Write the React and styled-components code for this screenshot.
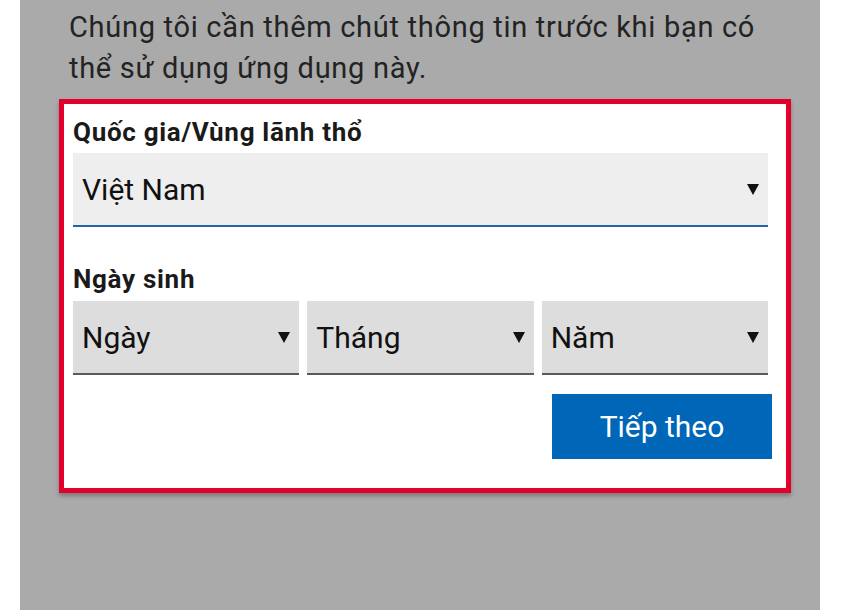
import React from "react";
import styled, { createGlobalStyle } from "styled-components";

const GlobalStyle = createGlobalStyle`
  html, body {
    margin: 0;
    padding: 0;
    background: #ffffff;
  }
  body {
    font-family: Roboto, "Noto Sans", "Liberation Sans", sans-serif;
  }
`;

const Screen = styled.div`
  margin-left: 20px;
  width: 800px;
  height: 610px;
  background-color: #aaaaaa;
  overflow: hidden;
`;

const Intro = styled.p`
  margin: 0;
  padding: 7px 30px 0 49px;
  font-size: 29px;
  letter-spacing: 0.7px;
  line-height: 41px;
  color: #232323;
`;

const Card = styled.div`
  margin: 10px 0 0 39px;
  width: 732px;
  box-sizing: border-box;
  border: 5px solid #e3002b;
  background-color: #ffffff;
  padding: 14px 16px 29px 9px;
  box-shadow: 0 3px 4px rgba(0, 0, 0, 0.28);
`;

const Label = styled.div`
  font-size: 26px;
  font-weight: 700;
  letter-spacing: 0.7px;
  line-height: 28px;
  color: #1a1a1a;
  margin-top: ${({ $top }) => $top || 0}px;
`;

const Select = styled.div`
  display: flex;
  align-items: center;
  justify-content: space-between;
  box-sizing: border-box;
  height: 74px;
  padding: 0 9px;
  background-color: ${({ $light }) => ($light ? "#eeeeee" : "#dddddd")};
  border-bottom: 2px solid ${({ $accent }) => ($accent ? "#1c64ae" : "#5a5a5a")};
  margin-right: 2px;
  margin-top: ${({ $top }) => $top || 0}px;
  font-size: 30px;
  color: #111111;
  flex: 1;
`;

const Row = styled.div`
  display: flex;
  gap: 8px;
  margin-top: 8px;
  margin-right: 2px;
  ${Select} {
    margin-right: 0;
  }
`;

const Footer = styled.div`
  display: flex;
  justify-content: flex-end;
  margin-top: 19px;
`;

const Button = styled.button`
  width: 220px;
  height: 65px;
  border: none;
  background-color: #0066b8;
  color: #ffffff;
  font-family: inherit;
  font-size: 30px;
  padding: 0;
  margin-right: -2px;
`;

const Arrow = () => (
  <svg width="12" height="11" viewBox="0 0 12 11">
    <polygon points="0,0 12,0 6,11" fill="#111" />
  </svg>
);

export default function App() {
  return (
    <>
      <GlobalStyle />
      <Screen>
        <Intro>
          Chúng tôi cần thêm chút thông tin trước khi bạn có thể sử dụng ứng
          dụng này.
        </Intro>
        <Card>
          <Label>Quốc gia/Vùng lãnh thổ</Label>
          <Select $light $accent $top={7}>
            <span>Việt Nam</span>
            <Arrow />
          </Select>
          <Label $top={38}>Ngày sinh</Label>
          <Row>
            <Select>
              <span>Ngày</span>
              <Arrow />
            </Select>
            <Select>
              <span>Tháng</span>
              <Arrow />
            </Select>
            <Select>
              <span>Năm</span>
              <Arrow />
            </Select>
          </Row>
          <Footer>
            <Button>Tiếp theo</Button>
          </Footer>
        </Card>
      </Screen>
    </>
  );
}
